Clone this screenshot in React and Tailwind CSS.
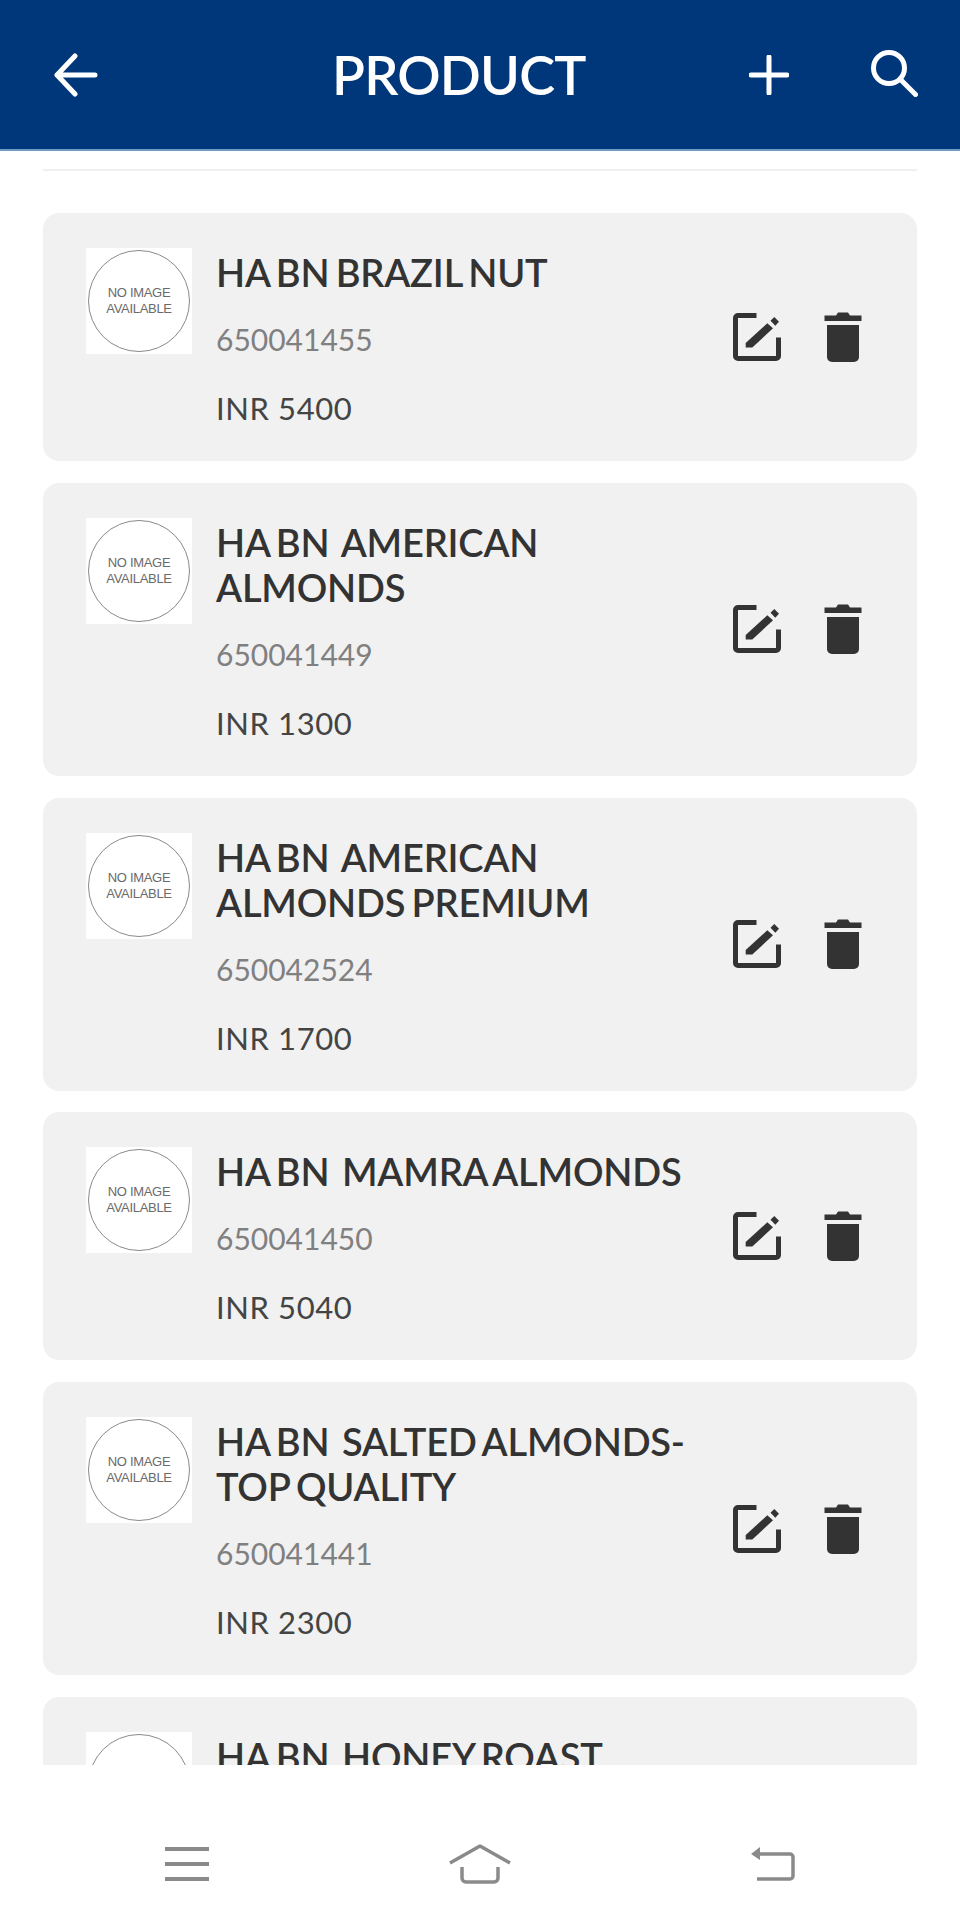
const products = [
  { name: ["HA BN BRAZIL NUT"], code: "650041455", price: "INR 5400" },
  { name: ["HA BN  AMERICAN", "ALMONDS"], code: "650041449", price: "INR 1300" },
  { name: ["HA BN  AMERICAN", "ALMONDS PREMIUM"], code: "650042524", price: "INR 1700" },
  { name: ["HA BN  MAMRA ALMONDS"], code: "650041450", price: "INR 5040" },
  { name: ["HA BN  SALTED ALMONDS-", "TOP QUALITY"], code: "650041441", price: "INR 2300" },
  { name: ["HA BN  HONEY ROAST", "ALMONDS"], code: "650041442", price: "INR 2300" },
];

function EditIcon() {
  return (
    <svg width="48" height="48" viewBox="0 0 48 48" className="block">
      <path d="M23.500 2.500H5A2.500 2.500 0 0 0 2.500 5v38A2.500 2.500 0 0 0 5 45.500h38a2.500 2.500 0 0 0 2.500-2.500V24.500" fill="none" stroke="#333" strokeWidth="5" />
      <path d="M12.700 30L34.300 10.300l5.700 5L19.300 34.500h-6.600z" fill="#333" />
      <path d="M37.500 7.700l3.800-3.700 4.700 4.700-3.700 4z" fill="#333" />
    </svg>
  );
}

function TrashIcon() {
  return (
    <svg width="38" height="50" viewBox="0 0 38 50" className="block">
      <path d="M0.500 3.500H12L14 0.500h10l2 3h11.500V9H0.500z" fill="#333" />
      <path d="M3 13h32v32a5 5 0 0 1-5 5H8a5 5 0 0 1-5-5z" fill="#333" />
    </svg>
  );
}

function Card({ p }) {
  return (
    <div className="flex shrink-0 items-center rounded-[16px] bg-[#f1f1f1] pl-[43px] pr-[55px]">
      <div className="flex flex-1 items-start self-start pt-[35px] pb-[35px]">
        <div className="flex h-[106px] w-[106px] shrink-0 items-center justify-center bg-white">
          <div className="flex h-[102px] w-[102px] flex-col items-center justify-center rounded-full border border-[#8a8a8a] text-[13px] leading-[16px] tracking-[-0.3px] text-[#6a6a6a] font-['Liberation_Sans',sans-serif]">
            <span>NO IMAGE</span>
            <span>AVAILABLE</span>
          </div>
        </div>
        <div className="ml-[24px] pt-[2px] font-['Lato',sans-serif]">
          <div className="text-[38px] font-semibold leading-[45px] tracking-[-0.2px] [word-spacing:-3px] text-[#333] whitespace-pre">
            {p.name.map((line) => (
              <div key={line}>{line}</div>
            ))}
          </div>
          <div className="mt-[26px] text-[30px] leading-[36px] text-[#808080]">{p.code}</div>
          <div className="mt-[33px] text-[31px] leading-[36px] tracking-[0.6px] text-[#444]">{p.price}</div>
        </div>
      </div>
      <div className="flex shrink-0 items-center gap-[43px]">
        <EditIcon />
        <TrashIcon />
      </div>
    </div>
  );
}

export default function App() {
  return (
    <div className="flex h-[1920px] w-[960px] flex-col overflow-hidden bg-white">
      <header className="flex h-[151px] shrink-0 items-center border-b-2 border-[#6f9cc4] bg-[#00367a] pr-[42px] pl-[54px] text-white">
        <svg width="44" height="44" viewBox="0 0 44 44" fill="none" stroke="white" strokeWidth="5" strokeLinecap="round" strokeLinejoin="round" className="shrink-0">
          <path d="M41 22H3M21 3L3 22l18 19" />
        </svg>
        <h1 className="ml-[234px] font-['Lato',sans-serif] text-[54px] font-semibold leading-none tracking-[-0.8px]">PRODUCT</h1>
        <svg width="40" height="40" viewBox="0 0 40 40" fill="none" stroke="white" strokeWidth="5" strokeLinecap="round" className="ml-auto shrink-0">
          <path d="M20 2v36M2 20h36" />
        </svg>
        <svg width="48" height="48" viewBox="0 0 48 48" fill="none" stroke="white" strokeWidth="5" strokeLinecap="round" className="ml-[81px] mb-[4px] shrink-0">
          <circle cx="19" cy="19" r="15.500" />
          <path d="M30 30l15.500 15.500" />
        </svg>
      </header>
      <main className="flex min-h-0 flex-1 flex-col overflow-hidden px-[43px]">
        <div className="mt-[18px] h-[2px] shrink-0 bg-[#f0f0f0]" />
        <div className="mt-[42px] flex flex-col gap-[21.800px]">
          {products.map((p) => (
            <Card key={p.code} p={p} />
          ))}
        </div>
      </main>
      <nav className="flex h-[155px] shrink-0 items-start justify-between bg-white px-[165px] pt-[79px]">
        <svg width="44" height="36" viewBox="0 0 44 36" fill="none" stroke="#8a8a8a" strokeWidth="4" className="mt-[2px]">
          <path d="M0 3h44M0 18h44M0 33h44" />
        </svg>
        <svg width="62" height="40" viewBox="0 0 62 40" fill="none" stroke="#8a8a8a" strokeWidth="3.500" strokeLinejoin="round">
          <path d="M1 19L31 2l30 17" />
          <path d="M13 23v11a4 4 0 0 0 4 4h28a4 4 0 0 0 4-4V23" />
        </svg>
        <svg width="44" height="36" viewBox="0 0 44 36" fill="none" stroke="#8a8a8a" strokeWidth="3.500" className="mt-[2px]">
          <path d="M5 8h34a3 3 0 0 1 3 3v19a3 3 0 0 1-3 3H6" />
          <path d="M0 8L9 1v13z" fill="#8a8a8a" stroke="none" />
        </svg>
      </nav>
    </div>
  );
}
